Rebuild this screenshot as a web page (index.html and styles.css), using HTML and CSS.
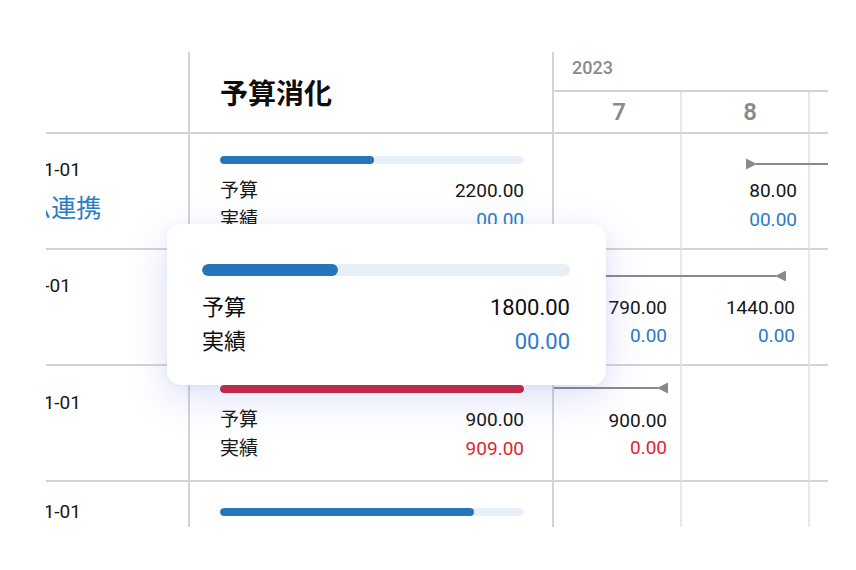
FILE: index.html
```html
<!DOCTYPE html>
<html lang="ja">
<head>
<meta charset="utf-8">
<title>予算消化</title>
<link rel="stylesheet" href="styles.css">
</head>
<body>
<div class="stage">
  <div class="viewport">
    <div class="table">
      <!-- header -->
      <div class="cell c-left head"></div>
      <div class="cell c-budget head head-title">予算消化</div>
      <div class="head-gantt">
        <div class="year">2023</div>
        <div class="months">
          <div class="month m7">7</div>
          <div class="month m8">8</div>
          <div class="month"></div>
        </div>
      </div>

      <!-- row 1 -->
      <div class="cell c-left r1">
        <div class="date d-a">2023-01-01</div>
        <div class="name">会計システム連携</div>
      </div>
      <div class="cell c-budget r1">
        <div class="track"><div class="fill" style="width:50.7%"></div></div>
        <div class="kv"><span>予算</span><span class="num">2200.00</span></div>
        <div class="kv"><span>実績</span><span class="num blue">00.00</span></div>
      </div>
      <div class="cell c-month r1"></div>
      <div class="cell c-month r1 tight">
        <svg class="arrow a1" width="160" height="12" viewBox="0 0 160 12"><polygon points="0,0.5 11,6 0,11.5"/><line x1="10" y1="6" x2="160" y2="6"/></svg>
        <div class="mv">80.00</div>
        <div class="mv blue">00.00</div>
      </div>
      <div class="cell c-month r1"></div>

      <!-- row 2 -->
      <div class="cell c-left r2">
        <div class="date d-b">2023-07-01</div>
      </div>
      <div class="cell c-budget r2">
        <div class="track"><div class="fill" style="width:37%"></div></div>
        <div class="kv"><span>予算</span><span class="num">1800.00</span></div>
        <div class="kv"><span>実績</span><span class="num blue">00.00</span></div>
      </div>
      <div class="cell c-month r2">
        <svg class="arrow a2" width="232" height="12" viewBox="0 0 232 12"><line x1="0" y1="6" x2="222" y2="6"/><polygon points="232,0.5 221,6 232,11.5"/></svg>
        <div class="mv">790.00</div>
        <div class="mv blue">0.00</div>
      </div>
      <div class="cell c-month r2">
        <div class="mv">1440.00</div>
        <div class="mv blue">0.00</div>
      </div>
      <div class="cell c-month r2"></div>

      <!-- row 3 -->
      <div class="cell c-left r3">
        <div class="date d-a">2023-01-01</div>
      </div>
      <div class="cell c-budget r3">
        <div class="track"><div class="fill over" style="width:100%"></div></div>
        <div class="kv"><span>予算</span><span class="num">900.00</span></div>
        <div class="kv"><span>実績</span><span class="num red">909.00</span></div>
      </div>
      <div class="cell c-month r3">
        <svg class="arrow a3" width="114" height="12" viewBox="0 0 114 12"><line x1="0" y1="6" x2="104" y2="6"/><polygon points="114,0.5 103,6 114,11.5"/></svg>
        <div class="mv">900.00</div>
        <div class="mv red">0.00</div>
      </div>
      <div class="cell c-month r3"></div>
      <div class="cell c-month r3"></div>

      <!-- row 4 -->
      <div class="cell c-left r4">
        <div class="date d-a">2023-01-01</div>
      </div>
      <div class="cell c-budget r4">
        <div class="track"><div class="fill" style="width:83.5%"></div></div>
        <div class="kv"><span>予算</span><span class="num">1200.00</span></div>
        <div class="kv"><span>実績</span><span class="num blue">00.00</span></div>
      </div>
      <div class="cell c-month r4"></div>
      <div class="cell c-month r4"></div>
      <div class="cell c-month r4"></div>
    </div>
  </div>

  <div class="popup">
    <div class="track big"><div class="fill" style="width:37%"></div></div>
    <div class="pkv"><span>予算</span><span class="num">1800.00</span></div>
    <div class="pkv"><span>実績</span><span class="num blue">00.00</span></div>
  </div>
</div>
</body>
</html>
```

FILE: styles.css
```css
* { box-sizing: border-box; }
html, body { margin: 0; padding: 0; background: #ffffff; }
body {
  font-family: "Roboto", "Noto Sans CJK JP", sans-serif;
  color: #161616;
}

.stage {
  position: relative;
  width: 856px;
  height: 570px;
  padding: 52px 0 0 46px;
  overflow: hidden;
}

.viewport {
  width: 782px;
  height: 475px;
  overflow: hidden;
}

.table {
  display: grid;
  grid-template-columns: 144px 364px 128px 128px 128px;
  grid-template-rows: 82px 116px 116px 116px 116px;
}

.cell { border-bottom: 2px solid #d4d4d4; }
.c-left { border-right: 2px solid #d4d4d4; white-space: nowrap; }
.c-budget { border-right: 2px solid #d4d4d4; padding: 0 28px 0 30px; }
.c-month {
  position: relative;
  border-right: 2px solid #e8e8e8;
  padding-right: 13px;
  text-align: right;
}
.c-month.tight { padding-right: 11px; }

/* header */
.head-title {
  display: flex;
  align-items: center;
  font-size: 28px;
  font-weight: 700;
  color: #0d0d0d;
  padding-left: 30px;
}
.head-gantt {
  grid-column: 3 / span 3;
  display: grid;
  grid-template-rows: 40px 42px;
}
.year {
  border-bottom: 2px solid #d4d4d4;
  padding: 5px 0 0 18px;
  font-size: 18px;
  line-height: 22px;
  font-weight: 500;
  color: #8a8a8a;
}
.months {
  display: grid;
  grid-template-columns: 128px 128px 128px;
  border-bottom: 2px solid #d4d4d4;
}
.month {
  border-right: 2px solid #e8e8e8;
  display: flex;
  align-items: center;
  justify-content: center;
  font-size: 24px;
  font-weight: 600;
  color: #8a8a8a;
}
.month.m7 { padding-left: 4px; }
.month.m8 { padding-left: 10px; }

/* left column */
.date {
  font-size: 19px;
  line-height: 24px;
  color: #161616;
}
.d-a { margin-left: -61px; }
.d-b { margin-left: -71px; }
.name {
  margin-top: 12px;
  margin-left: -144px;
  font-size: 25px;
  line-height: 30px;
  color: #2b7bc5;
}
.c-left.r1, .c-left.r2 { padding-top: 24px; }
.c-left.r3 { padding-top: 25px; }
.c-left.r4 { padding-top: 18px; }

/* budget column */
.track {
  height: 8px;
  border-radius: 4px;
  background: #e8eff7;
  overflow: hidden;
}
.fill {
  height: 100%;
  border-radius: 4px;
  background: #2674b9;
}
.fill.over { background: #cc2232; }
.kv {
  display: flex;
  justify-content: space-between;
  font-size: 19px;
  line-height: 29px;
  color: #161616;
}
.track + .kv { margin-top: 12px; }
.c-budget.r1, .c-budget.r2 { padding-top: 22px; }
.c-budget.r3 { padding-top: 19px; }
.c-budget.r4 { padding-top: 26px; }

.blue { color: #2b7bc5; }
.red { color: #e0262f; }

/* gantt cells */
.mv {
  font-size: 19px;
  line-height: 29px;
  color: #161616;
}
.mv.blue { color: #2b7bc5; }
.mv.red { color: #e0262f; }
.c-month.r1 { padding-top: 42px; }
.c-month.r2 { padding-top: 44px; }
.c-month.r2 .mv { line-height: 28px; }
.c-month.r3 { padding-top: 41px; }
.c-month.r3 .mv { line-height: 27px; }

.arrow {
  position: absolute;
  left: 0;
  fill: #8a8a8a;
  stroke: #8a8a8a;
  stroke-width: 2;
  overflow: visible;
}
.arrow polygon { stroke: none; }
.a1 { left: 64px; top: 24px; }
.a2 { top: 20px; }
.a3 { top: 16px; }

/* popup */
.popup {
  position: absolute;
  left: 167px;
  top: 224px;
  width: 439px;
  height: 161px;
  padding: 40px 36px 0 35px;
  background: #ffffff;
  border-radius: 14px;
  box-shadow: 0 12px 40px rgba(80, 100, 220, 0.20), 0 2px 10px rgba(80, 100, 220, 0.06);
}
.track.big {
  height: 12px;
  border-radius: 6px;
}
.track.big .fill { border-radius: 6px; }
.pkv {
  display: flex;
  justify-content: space-between;
  font-size: 22px;
  line-height: 34px;
  color: #0d0d0d;
}
.track + .pkv { margin-top: 15px; }
.pkv .blue { color: #2b7bc5; }
```
